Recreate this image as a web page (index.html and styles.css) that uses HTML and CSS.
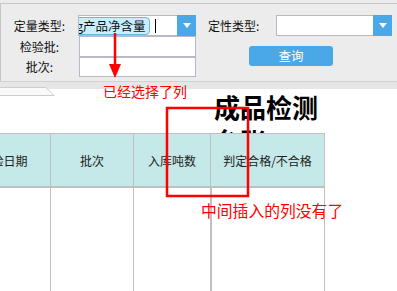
FILE: index.html
```html
<!DOCTYPE html>
<html>
	<head>
		<meta charset='utf-8'/>
		<title>成品检测台账</title>
		<link rel="stylesheet" href="styles.css">
	</head>
	<body>
		<div class=panel>
			<div class=form>
				<div class=groupleft>
					<label>定量类型:</label>
					<div class=combo>
						<div class=combotext><span class=chip>g产品净含量</span><span class=caret></span></div>
						<div class=combobtn><svg width=8 height=5 viewBox="0 0 8 5"><polygon points="0,0 8,0 4,5" fill="#fff"/></svg></div>
					</div>
					<label>检验批:</label>
					<div class=input></div>
					<label>批次:</label>
					<div class=input></div>
				</div>
				<div class=groupright>
					<div class=row>
						<label>定性类型:</label>
						<div class="combo wide">
							<div class=combotext></div>
							<div class=combobtn><svg width=8 height=5 viewBox="0 0 8 5"><polygon points="0,0 8,0 4,5" fill="#fff"/></svg></div>
						</div>
					</div>
					<button class=query>查询</button>
				</div>
			</div>
		</div>
		<div class=tabbar>
			<svg class=tab width=56 height=9 viewBox="0 0 56 9"><polygon points="-1,0.5 46,0.5 54,8.5 -1,8.5" fill="#fafafa" stroke="#cdcdcd"/></svg>
		</div>
		<div class=report>
			<div class=titlebox><div class=title>成品检测台账</div></div>
			<table class=grid>
				<colgroup><col class=c1><col class=c2><col class=c3><col class=c4></colgroup>
				<tr><th>检验日期</th><th>批次</th><th>入库吨数</th><th>判定合格/不合格</th></tr>
				<tr><td></td><td></td><td class=thick></td><td></td></tr>
			</table>
		</div>
		<!-- annotations drawn over the screenshot -->
		<svg class=marks width=397 height=291>
			<line x1=115 y1=33 x2=115 y2=66 stroke="#ff0000" stroke-width=2.5 />
			<polygon points="109,64 121,64 115,78" fill="#ff0000"/>
			<rect x=167 y=108 width=81 height=88 fill=none stroke="#ff0000" stroke-width=2.5 />
		</svg>
		<span class="note n1">已经选择了列</span>
		<span class="note n2">中间插入的列没有了</span>
	</body>
</html>
```
FILE: styles.css
```css
body {
	margin: 0;
	width: 397px;
	height: 291px;
	overflow: hidden;
	position: relative;
	background: #fff;
	font-family: "Noto Sans CJK SC", "Liberation Sans", sans-serif;
	color: #111;
}
.panel {
	background: #ececec;
	padding-top: 3px;
	height: 78px;
}
.form {
	display: flex;
	gap: 12px;
	height: 78px;
	box-sizing: border-box;
	padding-top: 11px;
	border-top: 1px solid #c6c6c6;
	border-left: 1px solid #c6c6c6;
}
label {
	font-size: 12px;
	line-height: 14px;
	align-self: center;
}
.groupleft {
	display: grid;
	grid-template-columns: 77px 118px;
	grid-template-rows: 21px 21px 20px;
}
.groupleft label {
	text-align: center;
}
.combo {
	display: flex;
	background: #fff;
	border: 1px solid #b8b8c8;
	box-sizing: border-box;
	height: 21px;
}
.combotext {
	flex: 1;
	display: flex;
	align-items: center;
	overflow: hidden;
}
.chip {
	margin-left: -4px;
	padding: 0 3px 0 0;
	height: 16px;
	line-height: 16px;
	font-size: 12.5px;
	background: #c8eefb;
	border: 1px solid #6eb4dc;
	border-radius: 4px;
	color: #111;
	white-space: nowrap;
}
.caret {
	width: 1px;
	height: 14px;
	margin-left: 5px;
	background: #000;
}
.combobtn {
	width: 19px;
	margin: -1px -1px -1px 0;
	background: #4aa7e8;
	display: flex;
	align-items: center;
	justify-content: center;
}
.input {
	background: #fff;
	border: 1px solid #b8b8c8;
	margin-left: 1px;
}
.groupright .row {
	display: flex;
	height: 21px;
}
.groupright label {
	width: 68px;
}
.wide {
	width: 116px;
}
.query {
	display: block;
	margin: 10px 0 0 41px;
	width: 84px;
	height: 20px;
	padding: 0;
	border: none;
	border-radius: 3px;
	background: #4aa8e8;
	color: #fff;
	font-family: inherit;
	font-size: 12.5px;
	line-height: 20px;
}
.tabbar {
	position: relative;
	height: 7px;
	border-top: 1px solid #d2d2d2;
	background: #e6e6e6;
}
.tab {
	position: absolute;
	left: 0;
	top: 5px;
}
.titlebox {
	height: 44px;
	overflow: hidden;
}
.title {
	width: 110px;
	margin-left: 214px;
	padding-top: 1px;
	font-size: 26px;
	font-weight: bold;
	line-height: 34px;
	color: #000;
}
.grid {
	margin-left: -44px;
	border-collapse: collapse;
	table-layout: fixed;
	width: 369px;
}
.c1 { width: 94px; }
.c2 { width: 83px; }
.c3 { width: 77px; }
.c4 { width: 114px; }
.grid th {
	height: 52px;
	padding: 0;
	background: #c5e8e8;
	border: 1px solid #c0c0c0;
	border-bottom: 2px solid #c0c0c0;
	font-size: 12px;
	font-weight: normal;
	color: #222;
}
.grid td {
	height: 110px;
	padding: 0;
	border-left: 1px solid #c0c0c0;
	border-right: 1px solid #c0c0c0;
}
.grid td.thick {
	border-right: 2px solid #c0c0c0;
}
.marks {
	position: absolute;
	left: 0;
	top: 0;
}
.note {
	position: absolute;
	color: #ff0000;
	white-space: nowrap;
	line-height: 1;
}
.n1 {
	left: 103px;
	top: 84px;
	font-size: 14px;
}
.n2 {
	left: 201px;
	top: 203px;
	font-size: 15.8px;
}
```
